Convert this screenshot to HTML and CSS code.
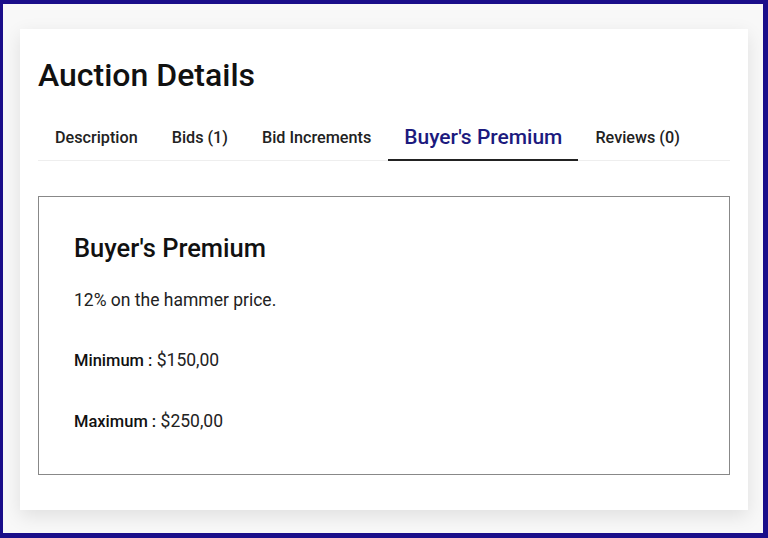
FILE: index.html
```html
<!DOCTYPE html>
<html>
<head>
<meta charset="utf-8">
<link rel="stylesheet" href="styles.css">
</head>
<body>
<div class="frame">
  <div class="card">
    <h1 class="title">Auction Details</h1>
    <div class="tabs">
      <div class="tab">Description</div>
      <div class="tab">Bids (1)</div>
      <div class="tab">Bid Increments</div>
      <div class="tab active">Buyer's Premium</div>
      <div class="tab">Reviews (0)</div>
    </div>
    <div class="panel">
      <h2 class="panel-title">Buyer's Premium</h2>
      <p class="desc">12% on the hammer price.</p>
      <p class="row"><span class="label">Minimum :</span> $150,00</p>
      <p class="row"><span class="label">Maximum :</span> $250,00</p>
    </div>
  </div>
</div>
</body>
</html>
```

FILE: styles.css
```css
* { box-sizing: border-box; }
html, body { margin: 0; padding: 0; }
body { width: 768px; height: 538px; overflow: hidden; font-family: Roboto, "Liberation Sans", sans-serif; color: #111; }
.frame {
  width: 768px; height: 538px;
  border-style: solid; border-color: #1a0e8a;
  border-width: 4px 5px 5px 3px;
  background: #f8f8f8;
  padding: 25px 15px 23px 17px;
}
.card {
  background: #fff;
  height: 481px;
  box-shadow: 0 6px 18px rgba(0,0,0,0.10);
  padding: 27px 18px 35px 18px;
  display: flex; flex-direction: column;
}
.title { margin: 0; font-size: 32px; font-weight: 500; line-height: 38px; color: #111; }
.tabs {
  margin-top: 31px;
  display: flex; align-items: flex-end;
  border-bottom: 1px solid #eee;
}
.tab {
  padding: 0 17px 12px 17px;
  font-size: 16.2px; font-weight: 500; line-height: 20px; color: #222;
}
.tab.active {
  padding: 0 16px 10px 16px;
  font-size: 21px; font-weight: 500; line-height: 24px; color: #1c1a7e;
  border-bottom: 2px solid #222;
  margin-bottom: -1px;
}
.panel {
  margin-top: 35px;
  flex: 1;
  border: 1px solid #888;
  padding: 36px 35px;
}
.panel-title { margin: 0; font-size: 25.5px; font-weight: 500; line-height: 30px; color: #111; }
.desc { margin: 26px 0 0; font-size: 17.5px; line-height: 22px; color: #222; }
.row { margin: 38px 0 0; font-size: 17.5px; line-height: 22px; color: #222; }
.label { font-size: 16.5px; font-weight: 500; color: #111; }
```
